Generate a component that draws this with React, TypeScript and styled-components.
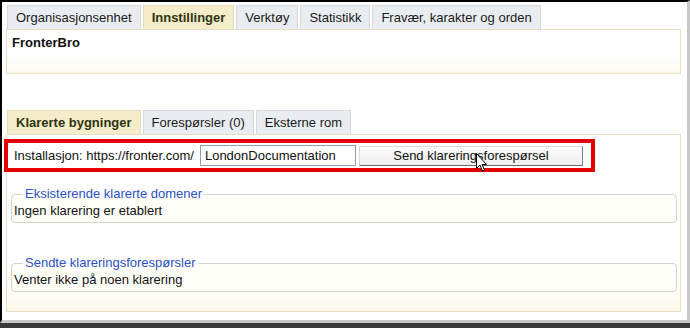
import React from "react";
import styled, { createGlobalStyle } from "styled-components";

const Global = createGlobalStyle`
  html, body { margin: 0; padding: 0; background: #ffffff; }
  body { font-family: "Liberation Sans", Arial, sans-serif; font-size: 13px; color: #111; }
`;

const Screen = styled.div`
  width: 690px;
  height: 328px;
  box-sizing: border-box;
  background: #3a3a3a;
  padding: 0 4px 5px 0;
  display: flex;
`;

const Page = styled.div`
  flex: 1;
  box-sizing: border-box;
  background: #ffffff;
  border-left: 2px solid #000;
  border-top: 2px solid #000;
  border-right: 3px solid #c8c8c8;
  border-bottom: 3px solid #c8c8c8;
  padding: 3px 6px 0 4px;
  display: flex;
  flex-direction: column;
  position: relative;
`;

const TabBar = styled.div`
  display: flex;
  gap: 2px;
  padding-left: 1px;
  height: 24px;
`;

const Tab = styled.div<{ $active?: boolean }>`
  box-sizing: border-box;
  height: 24px;
  padding: 0 8px;
  display: flex;
  align-items: center;
  border: 1px solid ${(p) => (p.$active ? "#e6dcb2" : "#d6d9dc")};
  border-bottom: none;
  background: ${(p) => (p.$active ? "#f5eccb" : "#e9edf1")};
  color: ${(p) => (p.$active ? "#2e3510" : "#1a1a1a")};
  font-weight: ${(p) => (p.$active ? "bold" : "normal")};
  font-size: 13px;
`;

const Panel = styled.div<{ $h: number }>`
  box-sizing: border-box;
  height: ${(p) => p.$h}px;
  border: 1px solid #e6dfc2;
  background: linear-gradient(#ffffff 60%, #fcfaf0);
  padding: 5px 5px;
`;

const Title = styled.div`
  font-weight: bold;
  font-size: 13px;
`;

const Spacer = styled.div<{ $h: number }>`
  height: ${(p) => p.$h}px;
`;

const BigPanel = styled.div`
  box-sizing: border-box;
  height: 178px;
  border: 1px solid #e6dfc2;
  background: linear-gradient(#ffffff 80%, #fbf8ea);
  padding: 4px 3px 0 3px;
  display: flex;
  flex-direction: column;
  position: relative;
`;

const Highlight = styled.div`
  box-sizing: border-box;
  width: 591px;
  height: 33px;
  margin-left: -6px;
  border: 4px solid #e30000;
  display: flex;
  align-items: center;
  padding-left: 6px;
  gap: 3px;
`;

const Label = styled.span`
  font-size: 13px;
  color: #111;
`;

const Input = styled.div`
  box-sizing: border-box;
  margin-left: 3px;
  width: 156px;
  height: 21px;
  border: 1px solid #8fa1b6;
  padding: 0 4px;
  display: flex;
  align-items: center;
  font-size: 13px;
  color: #111;
  background: #fff;
`;

const Button = styled.div`
  box-sizing: border-box;
  width: 224px;
  height: 20px;
  border: 1px solid #d8d8d8;
  border-right-color: #7a7a7a;
  border-bottom-color: #6a6a6a;
  background: linear-gradient(#fcfcfc, #eeeeee);
  display: flex;
  align-items: center;
  justify-content: center;
  font-size: 13px;
  color: #111;
`;

const Fieldset = styled.fieldset<{ $top: number }>`
  box-sizing: border-box;
  margin: ${(p) => p.$top}px 0 0 1px;
  width: 666px;
  height: 36px;
  border: 1px solid #d3d3cf;
  border-radius: 4px;
  padding: 2px 2px 0 2px;
  background: #fffffa;
`;

const Legend = styled.legend`
  color: #2b50c8;
  font-size: 13px;
  padding: 0 2px;
  margin-left: 9px;
  line-height: 14px;
`;

const FieldText = styled.div`
  font-size: 13px;
  line-height: 16px;
  color: #111;
`;

const Cursor = styled.svg`
  position: absolute;
  left: 469px;
  top: 18px;
`;

export default function App() {
  return (
    <>
      <Global />
      <Screen>
        <Page>
          <TabBar>
            <Tab>Organisasjonsenhet</Tab>
            <Tab $active>Innstillinger</Tab>
            <Tab>Verktøy</Tab>
            <Tab>Statistikk</Tab>
            <Tab>Fravær, karakter og orden</Tab>
          </TabBar>
          <Panel $h={45}>
            <Title>FronterBro</Title>
          </Panel>
          <Spacer $h={36} />
          <TabBar>
            <Tab $active>Klarerte bygninger</Tab>
            <Tab>Forespørsler (0)</Tab>
            <Tab>Eksterne rom</Tab>
          </TabBar>
          <BigPanel>
            <Highlight>
              <Label>Installasjon: https://fronter.com/</Label>
              <Input>LondonDocumentation</Input>
              <Button>Send klareringsforespørsel</Button>
            </Highlight>
            <Fieldset $top={15}>
              <Legend>Eksisterende klarerte domener</Legend>
              <FieldText>Ingen klarering er etablert</FieldText>
            </Fieldset>
            <Fieldset $top={33}>
              <Legend>Sendte klareringsforespørsler</Legend>
              <FieldText>Venter ikke på noen klarering</FieldText>
            </Fieldset>
            <Cursor width="12" height="20" viewBox="0 0 12 20">
              <path d="M0.5 0.5 L0.5 15.5 L4 12 L6.5 18 L8.5 17 L6 11.5 L10.5 11.5 Z" fill="#fff" stroke="#000" strokeWidth="1" />
            </Cursor>
          </BigPanel>
        </Page>
      </Screen>
    </>
  );
}
